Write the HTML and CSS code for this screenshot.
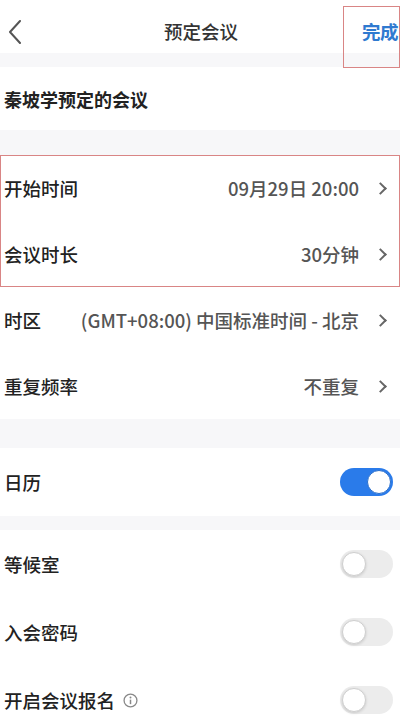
FILE: index.html
```html
<!DOCTYPE html>
<html lang="zh">
<head>
  <meta charset="utf-8">
  <title>预定会议</title>
  <link rel="stylesheet" href="styles.css">
</head>
<body>

  <div id="topBar">
    <svg class="back" width="24" height="24" viewBox="0 0 24 24">
      <polyline points="16,1 6,12 16,23" fill="none" stroke="#555" stroke-width="2" stroke-linecap="round" stroke-linejoin="round"/>
    </svg>
    <div class="title">预定会议</div>
    <div class="done"><span class="doneText">完成<span class="mark"></span></span></div>
  </div>

  <div class="band small"></div>
  <div class="row topic">秦坡学预定的会议</div>
  <div class="band mid"></div>

  <!-- start and duration, boxed in the screenshot -->
  <div class="boxed">
    <div class="row">
      <span class="label">开始时间</span>
      <span class="value">09月29日 20:00</span>
      <span class="arrow"></span>
    </div>
    <div class="row">
      <span class="label">会议时长</span>
      <span class="value">30分钟</span>
      <span class="arrow"></span>
    </div>
  </div>

  <div class="row">
    <span class="label">时区</span>
    <span class="value">(GMT+08:00) 中国标准时间 - 北京</span>
    <span class="arrow"></span>
  </div>
  <div class="row">
    <span class="label">重复频率</span>
    <span class="value">不重复</span>
    <span class="arrow"></span>
  </div>

  <div class="band big"></div>
  <div class="row tall">
    <span class="label">日历</span>
    <span class="switch on"><span class="knob"></span></span>
  </div>
  <div class="band small"></div>

  <div class="row tall">
    <span class="label">等候室</span>
    <span class="switch"><span class="knob"></span></span>
  </div>
  <div class="row tall">
    <span class="label">入会密码</span>
    <span class="switch"><span class="knob"></span></span>
  </div>
  <div class="row tall">
    <span class="label">开启会议报名
      <svg class="info" width="15" height="15" viewBox="0 0 14 14">
        <circle cx="7" cy="7" r="6" fill="none" stroke="#888" stroke-width="1.2"/>
        <circle cx="7" cy="4.2" r="0.9" fill="#888"/>
        <line x1="7" y1="6.2" x2="7" y2="10.4" stroke="#888" stroke-width="1.4"/>
      </svg>
    </span>
    <span class="switch"><span class="knob"></span></span>
  </div>

</body>
</html>
```

FILE: styles.css
```css
body {
  margin: 0;
  width: 400px;
  height: 718px;
  overflow: hidden;
  background-color: white;
  color: #222;
  font-family: "Noto Sans CJK SC", "Noto Sans", sans-serif;
  font-size: 18.5px;
  font-weight: 500;
}

#topBar {
  display: grid;
  grid-template-columns: 1fr auto 1fr;
  align-items: center;
  box-sizing: border-box;
  height: 53px;
  padding: 8px 2px 0 4px;
}

.back {
  margin-top: 2px;
}

.title {
  color: #333;
  font-size: 18.5px;
}

.done {
  display: flex;
  justify-content: flex-end;
}

.doneText {
  position: relative;
  color: #2f7ad0;
  font-weight: bold;
  font-size: 18.5px;
  letter-spacing: -0.5px;
}

/* annotation box drawn over the header */
.mark {
  position: absolute;
  left: -19px;
  top: -12px;
  box-sizing: border-box;
  width: 57px;
  height: 62px;
  border: 1.5px solid #d98585;
}

.band {
  background-color: #f7f7f9;
}

.band.small {
  height: 14px;
}

.band.mid {
  height: 25px;
}

.band.big {
  height: 29px;
}

.row {
  display: flex;
  align-items: center;
  height: 66px;
  padding: 0 12px 0 4px;
}

.row.tall {
  height: 68px;
  padding-right: 7px;
}

.topic {
  height: 63px;
  font-weight: bold;
  font-size: 18px;
}

.boxed {
  outline: 1.5px solid #d98585;
  outline-offset: -1.5px;
}

.label {
  display: flex;
  align-items: center;
  gap: 8px;
  flex: 1;
  color: #222;
}

.value {
  color: #555;
}

.arrow {
  width: 7px;
  height: 7px;
  margin-left: 17px;
  margin-right: 3px;
  border-top: 2px solid #666;
  border-right: 2px solid #666;
  transform: rotate(45deg);
}

.switch {
  display: flex;
  align-items: center;
  width: 53px;
  height: 28px;
  border-radius: 14px;
  background-color: #ececec;
  box-sizing: border-box;
  padding: 2px;
}

.knob {
  width: 24px;
  height: 24px;
  border-radius: 50%;
  background-color: white;
  box-sizing: border-box;
  border: 1px solid #cfcfcf;
  box-shadow: 0 1px 3px rgba(0, 0, 0, 0.15);
}

.switch.on {
  background-color: #2a7bea;
  justify-content: flex-end;
}

.switch.on .knob {
  border: 1.5px solid #2a6fcc;
  box-shadow: none;
}
```
